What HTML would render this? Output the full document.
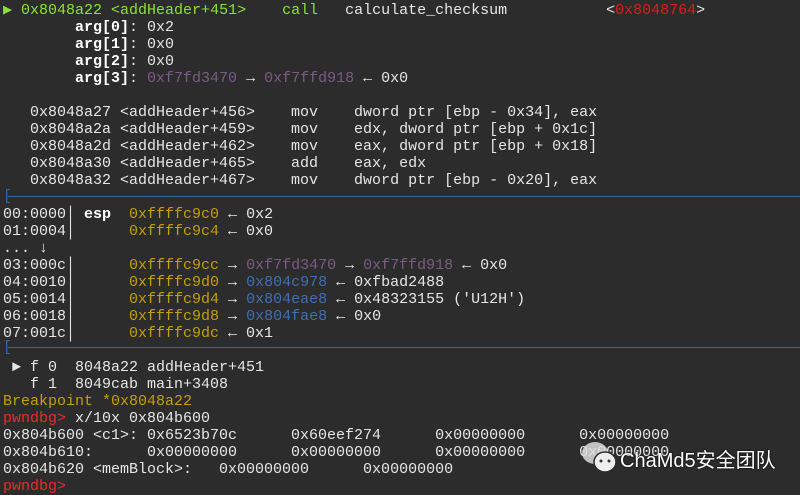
<!DOCTYPE html>
<html><head><meta charset="utf-8"><style>
html,body{margin:0;padding:0;background:#2c2c2c;width:800px;height:495px;overflow:hidden}
pre{position:absolute;left:3px;top:2px;margin:0;font-family:"Liberation Mono","DejaVu Sans Mono",monospace;font-size:15px;line-height:17px;color:#e6e6e6;white-space:pre}
.g{color:#8ae234}.b{font-weight:bold;color:#fff}.p{color:#7d5a85}.bl{color:#3f6fb5}.y{color:#c4a000}.r{color:#e01b1b}.rd{color:#ef2929}
.sep{position:absolute;left:8px;right:0;height:1px;background:#3465a4}
.br{position:absolute;left:3px;color:#3465a4;font:15px "Liberation Mono",monospace}
.wm{position:absolute;left:620px;top:444px;color:#fff;font:20px "Liberation Sans","Noto Sans CJK SC",sans-serif;text-shadow:0 0 2px #000}
</style></head><body>
<pre><span class="g">▶ 0x8048a22 &lt;addHeader+451&gt;    call</span>   calculate_checksum           &lt;<span class="r">0x8048764</span>&gt;
        <span class="b">arg[0]</span>: 0x2
        <span class="b">arg[1]</span>: 0x0
        <span class="b">arg[2]</span>: 0x0
        <span class="b">arg[3]</span>: <span class="p">0xf7fd3470</span> → <span class="p">0xf7ffd918</span> ← 0x0

   0x8048a27 &lt;addHeader+456&gt;    mov    dword ptr [ebp - 0x34], eax
   0x8048a2a &lt;addHeader+459&gt;    mov    edx, dword ptr [ebp + 0x1c]
   0x8048a2d &lt;addHeader+462&gt;    mov    eax, dword ptr [ebp + 0x18]
   0x8048a30 &lt;addHeader+465&gt;    add    eax, edx
   0x8048a32 &lt;addHeader+467&gt;    mov    dword ptr [ebp - 0x20], eax

00:0000│ <span class="b">esp</span>  <span class="y">0xffffc9c0</span> ← 0x2
01:0004│      <span class="y">0xffffc9c4</span> ← 0x0
... ↓
03:000c│      <span class="y">0xffffc9cc</span> → <span class="p">0xf7fd3470</span> → <span class="p">0xf7ffd918</span> ← 0x0
04:0010│      <span class="y">0xffffc9d0</span> → <span class="bl">0x804c978</span> ← 0xfbad2488
05:0014│      <span class="y">0xffffc9d4</span> → <span class="bl">0x804eae8</span> ← 0x48323155 ('U12H')
06:0018│      <span class="y">0xffffc9d8</span> → <span class="bl">0x804fae8</span> ← 0x0
07:001c│      <span class="y">0xffffc9dc</span> ← 0x1

 ► f 0  8048a22 addHeader+451
   f 1  8049cab main+3408
<span class="y">Breakpoint *0x8048a22</span>
<span class="rd">pwndbg&gt;</span> x/10x 0x804b600
0x804b600 &lt;c1&gt;: 0x6523b70c      0x60eef274      0x00000000      0x00000000
0x804b610:      0x00000000      0x00000000      0x00000000      0x00000000
0x804b620 &lt;memBlock&gt;:   0x00000000      0x00000000
<span class="rd">pwndbg&gt;</span></pre>
<div class="sep" style="top:196px"></div><div class="br" style="top:188px">[</div>
<div class="sep" style="top:347px"></div><div class="br" style="top:339px">[</div>
<svg style="position:absolute;left:580px;top:440px" width="40" height="36" viewBox="0 0 40 36"><ellipse cx="15" cy="13" rx="13" ry="11" fill="#ddd" opacity=".85"/><ellipse cx="25" cy="22" rx="11" ry="10" fill="#eee" stroke="#2c2c2c" stroke-width="1.5"/><circle cx="21" cy="21" r="1.5" fill="#333"/><circle cx="29" cy="21" r="1.5" fill="#333"/></svg>
<div class="wm">ChaMd5安全团队</div>
</body></html>
